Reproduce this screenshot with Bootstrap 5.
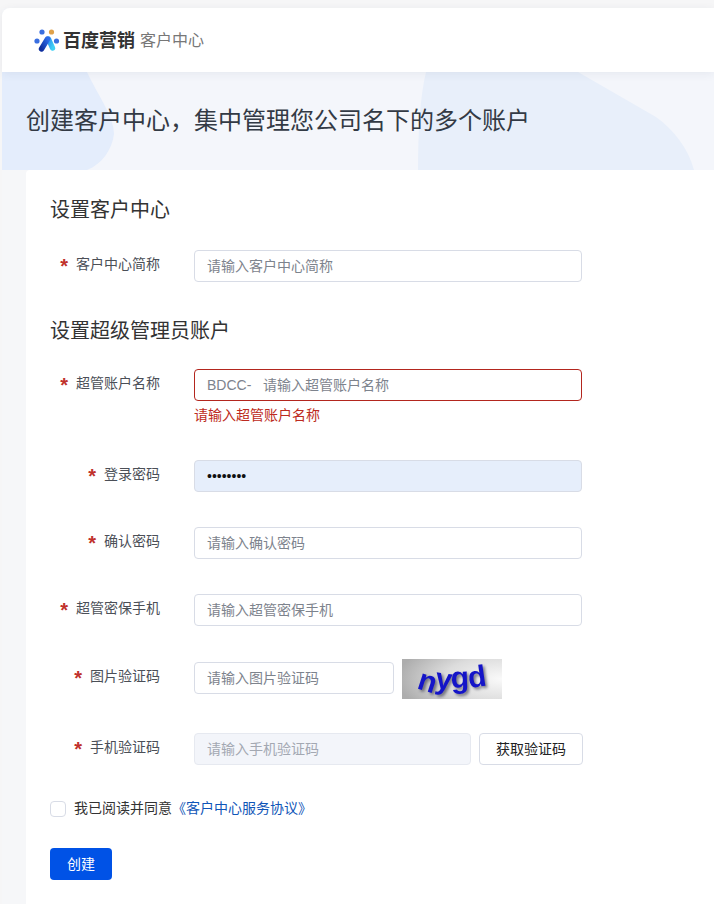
<!DOCTYPE html>
<html lang="zh-CN">
<head>
  <meta charset="UTF-8">
  <meta name="viewport" content="width=device-width, initial-scale=1.0">
  <title>百度营销 客户中心</title>
  <link href="https://cdn.jsdelivr.net/npm/bootstrap@5.3.1/dist/css/bootstrap.min.css" rel="stylesheet">
  <style>
    html, body { height: 904px; overflow: hidden; }
    body {
      background: #f6f6f7;
      font-family: "Liberation Sans", "Noto Sans CJK SC", sans-serif;
      font-size: 14px;
      color: #333;
    }
    .page-wrap { margin: 8px 0 0 2px; height: 896px; background: #f6f7f9; }
    .top-head {
      position: relative;
      z-index: 2;
      height: 64px;
      padding: 2px 0 0 32px;
      background: #fff;
      border-top-left-radius: 8px;
      box-shadow: 0 2px 10px rgba(40, 50, 80, .07);
    }
    .brand-main { font-size: 18px; font-weight: 700; color: #333; margin-left: 2px; }
    .brand-sub { font-size: 16px; color: #777; margin-left: 5px; }
    .hero { position: relative; height: 98px; padding: 1px 0 0 24px; background: #f4f6fb; overflow: hidden; }
    .hero-bg { position: absolute; left: 0; top: 0; }
    .hero-title { position: relative; margin: 0; font-size: 24px; font-weight: 400; color: #333a45; }
    .form-panel { margin-left: 24px; height: 734px; padding: 24px 24px 0; background: #fff; border-top-left-radius: 4px; }
    .sec-title { margin: 0; height: 32px; line-height: 32px; font-size: 20px; font-weight: 400; color: #333; }
    .field { display: flex; }
    .field-label {
      flex: 0 0 110px;
      height: 28px;
      line-height: 28px;
      text-align: right;
      font-size: 14px;
      color: #4b4f57;
      white-space: nowrap;
    }
    .req { color: #c0312b; font-size: 20px; font-weight: 700; line-height: 1; margin-right: 8px; vertical-align: -4px; }
    .field-body { margin-left: 34px; }
    .form-control.fld {
      width: 388px;
      height: 32px;
      min-height: 0;
      padding: 0 12px;
      font-size: 14px;
      color: #222;
      border: 1px solid #d8dce6;
      border-radius: 4px;
      box-shadow: none;
    }
    .fld::placeholder { color: #7d838d; opacity: 1; }
    .form-control.fld-err { border-color: #b3261e; }
    .form-control.fld-auto { background: #e6eefb; color: #111; }
    .form-control.fld-code { width: 200px; }
    .form-control.fld-sms { width: 277px; }
    .form-control.fld-sms:disabled { background: #f3f5fa; border-color: #e6e9f0; }
    .fld-sms::placeholder { color: #a3a8b2; }
    .err-text { margin-top: 6px; line-height: 16px; font-size: 14px; color: #bd2a20; }
    .captcha { display: block; margin: -3px 0 0 8px; overflow: visible; }
    .captcha-text {
      font-family: "Liberation Sans", sans-serif;
      font-size: 30px;
      font-weight: 700;
      fill: #1414c8;
      filter: drop-shadow(2px 2px 1.5px rgba(40, 40, 60, .6));
    }
    .btn.sms-btn {
      width: 104px;
      height: 32px;
      margin-left: 8px;
      padding: 0;
      font-size: 14px;
      color: #222;
      background: #fff;
      border: 1px solid #d8dce6;
      border-radius: 4px;
    }
    .form-check-input.agree {
      width: 16px;
      height: 16px;
      margin: 0 8px 0 0;
      border: 1px solid #d8dce6;
      border-radius: 4px;
    }
    .agree-link { color: #0f55b8; text-decoration: none; }
    .btn.go-btn {
      width: 62px;
      height: 32px;
      padding: 0;
      font-size: 14px;
      color: #fff;
      background: #0052e6;
      border: 0;
      border-radius: 4px;
    }
    .gap-first { margin-top: 24px; }
    .gap-a { margin-top: 22px; }
    .gap-b { margin-top: 33px; }
    .gap-c { margin-top: 37px; }
    .gap-d { margin-top: 35px; }
    .gap-e { margin-top: 36px; }
    .gap-f { margin-top: 34px; }
    .gap-h { margin-top: 33px; }
    .gap-g { margin-top: 29px; }
  </style>
</head>

<body>
  <div class="page-wrap">
    <header class="top-head d-flex align-items-center">
      <svg width="27" height="26" viewBox="0 0 27 26" aria-hidden="true">
        <defs>
          <linearGradient id="legDark" x1="0" y1="1" x2="1" y2="0">
            <stop offset="0" stop-color="#0f2f9e"/><stop offset="1" stop-color="#2b6be8"/>
          </linearGradient>
          <linearGradient id="legLight" x1="0" y1="0" x2="1" y2="1">
            <stop offset="0" stop-color="#2f8ff0"/><stop offset="1" stop-color="#3fd0f5"/>
          </linearGradient>
        </defs>
        <circle cx="8" cy="4" r="2.6" fill="#3a6fe0"/>
        <circle cx="17.5" cy="4" r="2.6" fill="#e0a24a"/>
        <circle cx="3" cy="13" r="2.6" fill="#3a6fe0"/>
        <circle cx="22.5" cy="13" r="2.6" fill="#3a6fe0"/>
        <path d="M14.5 11 L18.5 20" stroke="url(#legLight)" stroke-width="5.4" stroke-linecap="round" fill="none"/>
        <path d="M13.5 11 L7.5 21" stroke="url(#legDark)" stroke-width="5.4" stroke-linecap="round" fill="none"/>
      </svg>
      <span class="brand-main">百度营销</span>
      <span class="brand-sub">客户中心</span>
    </header>

    <section class="hero d-flex align-items-center">
      <svg class="hero-bg" width="712" height="98" viewBox="0 0 712 98" aria-hidden="true">
        <path d="M0 0 H85 C95 22 112 44 112 62 C110 78 100 92 85 98 H0 Z" fill="#e4edfc"/>
        <path d="M416 98 C416 60 418 25 424 0 H576 L654 45 C672 58 686 76 692 98 Z" fill="#e8effa"/>
      </svg>
      <h1 class="hero-title">创建客户中心，集中管理您公司名下的多个账户</h1>
    </section>

    <main class="form-panel">
      <h2 class="sec-title">设置客户中心</h2>

      <div class="field gap-first">
        <label class="field-label"><span class="req">*</span>客户中心简称</label>
        <div class="field-body"><input class="form-control fld" placeholder="请输入客户中心简称"></div>
      </div>

      <h2 class="sec-title gap-b">设置超级管理员账户</h2>

      <div class="field gap-a">
        <label class="field-label"><span class="req">*</span>超管账户名称</label>
        <div class="field-body">
          <input class="form-control fld fld-err" placeholder="BDCC-&nbsp;&nbsp;&nbsp;请输入超管账户名称">
          <div class="err-text">请输入超管账户名称</div>
        </div>
      </div>

      <div class="field gap-c">
        <label class="field-label"><span class="req">*</span>登录密码</label>
        <div class="field-body"><input class="form-control fld fld-auto" type="password" value="12345678"></div>
      </div>

      <div class="field gap-d">
        <label class="field-label"><span class="req">*</span>确认密码</label>
        <div class="field-body"><input class="form-control fld" placeholder="请输入确认密码"></div>
      </div>

      <div class="field gap-d">
        <label class="field-label"><span class="req">*</span>超管密保手机</label>
        <div class="field-body"><input class="form-control fld" placeholder="请输入超管密保手机"></div>
      </div>

      <div class="field gap-e">
        <label class="field-label"><span class="req">*</span>图片验证码</label>
        <div class="field-body d-flex">
          <input class="form-control fld fld-code" placeholder="请输入图片验证码">
          <svg class="captcha" width="100" height="40" viewBox="0 0 100 40" role="img" aria-label="验证码">
            <defs>
              <radialGradient id="capBg" cx="1" cy=".5" r="1.05">
                <stop offset="0" stop-color="#fafafa"/><stop offset=".55" stop-color="#dcdcdc"/><stop offset="1" stop-color="#adadad"/>
              </radialGradient>
            </defs>
            <rect width="100" height="40" fill="url(#capBg)"/>
            <text class="captcha-text" x="14" y="29" rotate="18 8 -2 -8">nygd</text>
          </svg>
        </div>
      </div>

      <div class="field gap-f">
        <label class="field-label"><span class="req">*</span>手机验证码</label>
        <div class="field-body d-flex">
          <input class="form-control fld fld-sms" placeholder="请输入手机验证码" disabled>
          <button class="btn sms-btn" type="button">获取验证码</button>
        </div>
      </div>

      <div class="d-flex align-items-center gap-h">
        <input class="form-check-input agree" type="checkbox">
        <span>我已阅读并同意</span><a class="agree-link" href="#">《客户中心服务协议》</a>
      </div>

      <div class="gap-g"><button class="btn go-btn" type="button">创建</button></div>
    </main>
  </div>

  <script src="https://cdn.jsdelivr.net/npm/bootstrap@5.3.1/dist/js/bootstrap.bundle.min.js"></script>
</body>
</html>
